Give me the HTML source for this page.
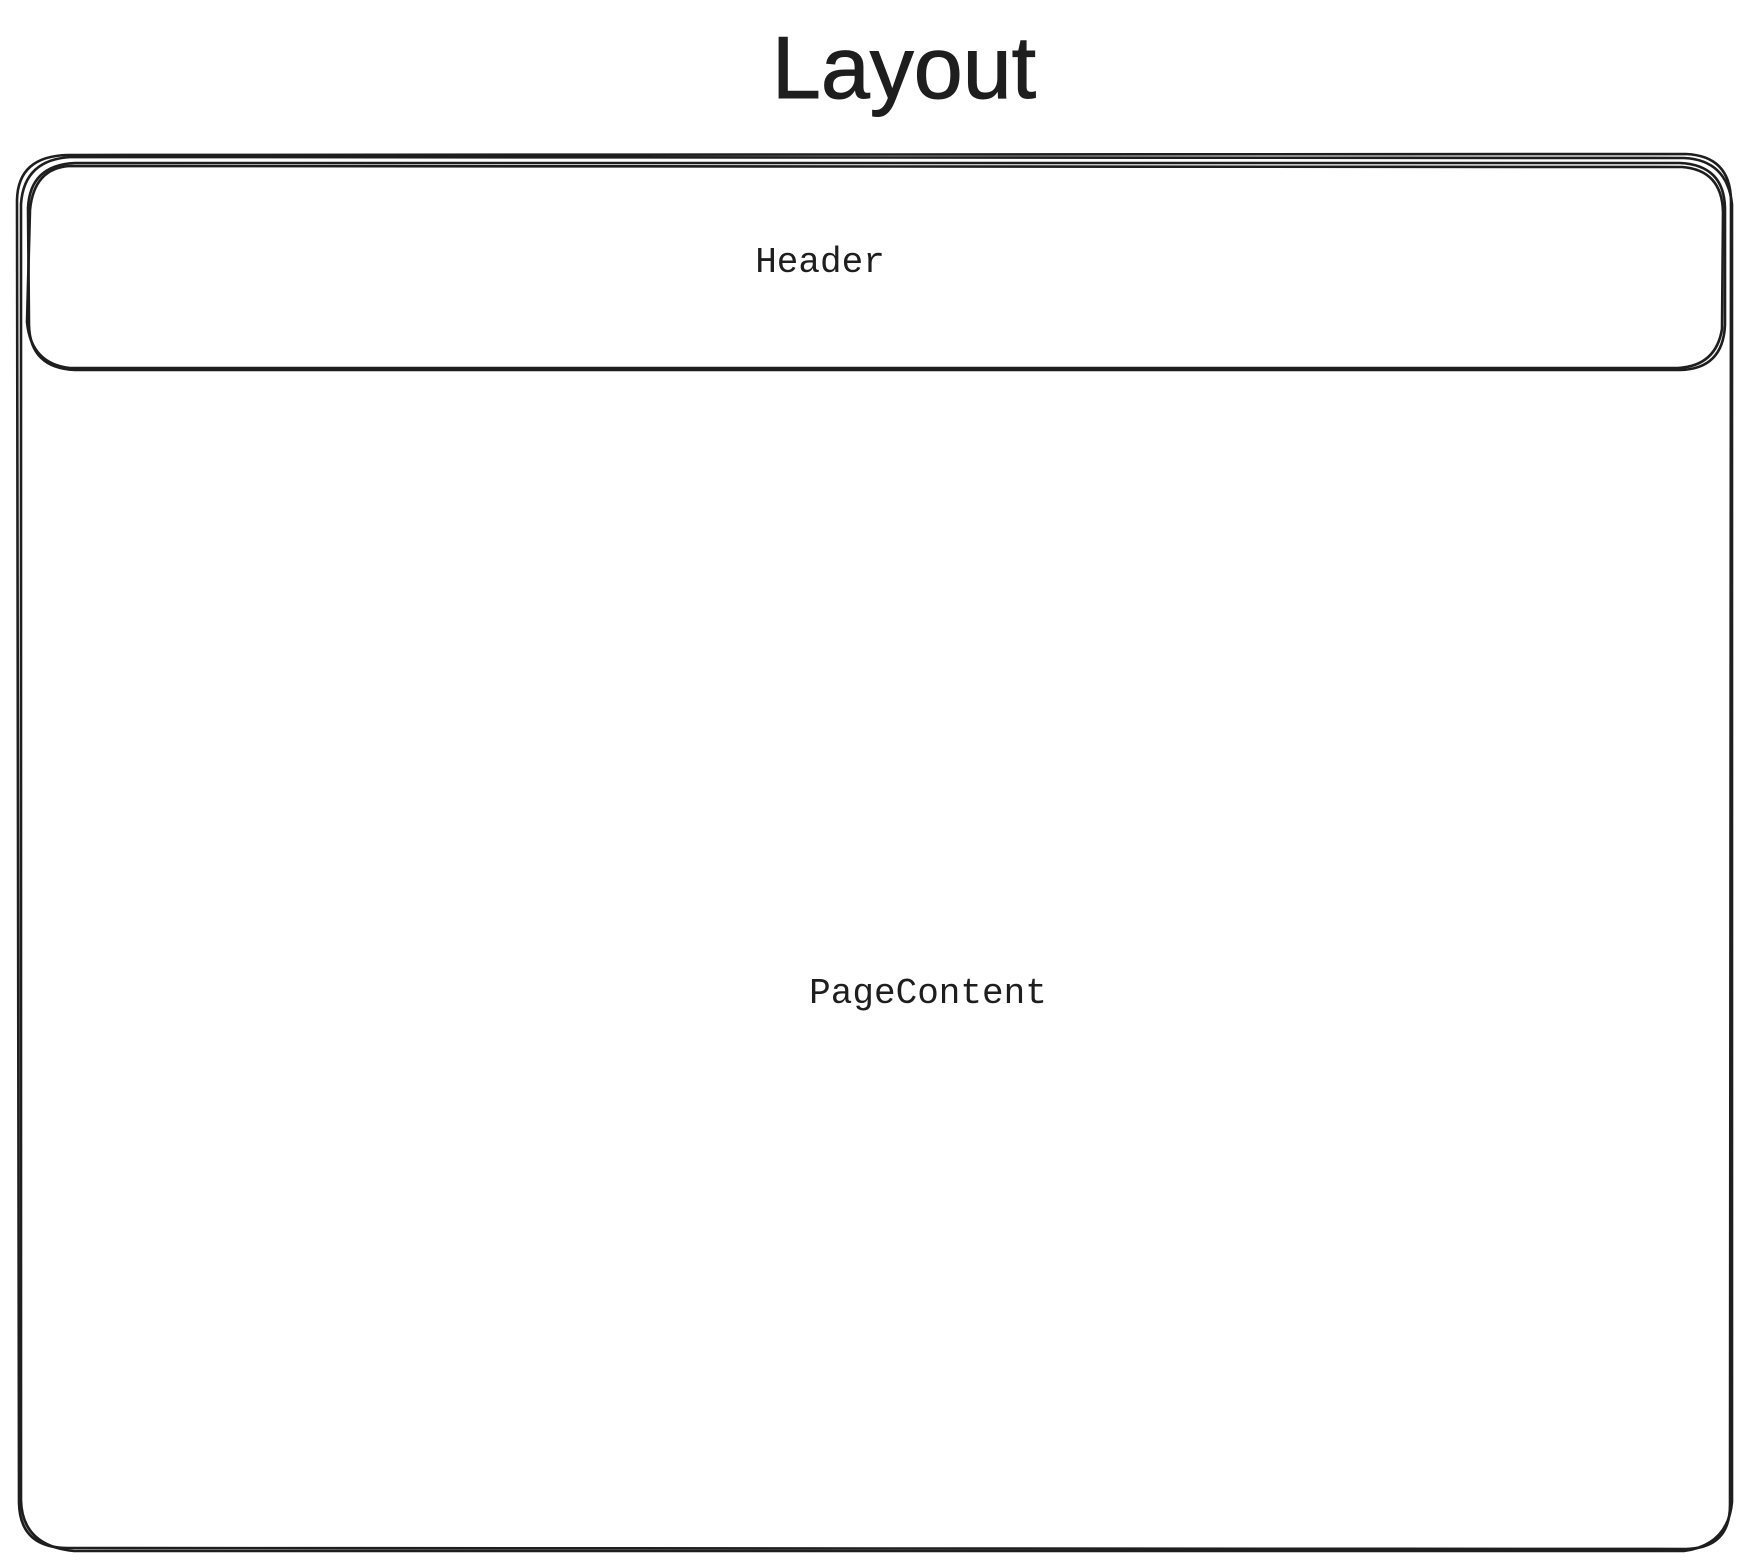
<!DOCTYPE html>
<html><head><style>
html,body{margin:0;padding:0;background:#fff;}
body{width:1749px;height:1563px;position:relative;overflow:hidden;}
svg{position:absolute;left:0;top:0;}
</style></head><body>
<svg width="1749" height="1563" viewBox="0 0 1749 1563">
<g fill="none" stroke="#1e1e1e" stroke-width="2.6" stroke-linecap="round">
<path d="M68 155 L1686 154 Q1730 156 1731 200 L1730 1505 Q1730 1548 1686 1549 L68 1548 Q20 1548 19 1503 L17 200 Q18 156 68 155 Z"/>
<path d="M72 157 L1684 158 Q1727 160 1732 204 L1732 1502 Q1728 1545 1684 1551 L74 1551 Q22 1546 21 1500 L21 204 Q24 159 72 157 Z"/>
<path d="M75 163 L1680 163 Q1724 165 1725 208 L1725 325 Q1723 369 1680 370 L75 370 Q30 368 29 325 L28 208 Q30 165 75 163 Z"/>
<path d="M70 166 L1682 167 Q1722 170 1723 212 L1722 329 Q1716 366 1678 368 L70 368 Q31 364 27 322 L30 210 Q34 168 70 166 Z"/>
</g>
<g fill="#1e1e1e" font-family="Liberation Sans, sans-serif">
<text x="904" y="98" font-size="88" text-anchor="middle" stroke="#1e1e1e" stroke-width="1">Layout</text>
</g>
<g fill="#1e1e1e" font-family="Liberation Mono, monospace" font-size="36">
<text x="820" y="272" text-anchor="middle">Header</text>
<text x="928" y="1003" text-anchor="middle">PageContent</text>
</g>
</svg>
</body></html>
